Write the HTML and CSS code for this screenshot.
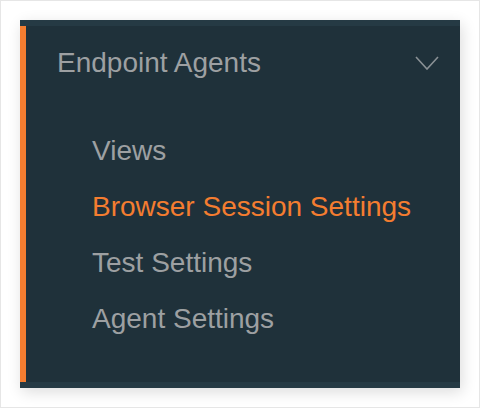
FILE: index.html
```html
<!DOCTYPE html>
<html>
<head>
<meta charset="utf-8">
<link rel="stylesheet" href="styles.css">
</head>
<body>
<div class="frame">
  <nav class="panel">
    <div class="inner">
      <div class="header">
        <span class="title">Endpoint Agents</span>
        <svg class="chev" width="24" height="14" viewBox="0 0 24 14"><path d="M1 1 L12 13 L23 1" fill="none" stroke="#8a9195" stroke-width="1.6"/></svg>
      </div>
      <ul class="items">
        <li class="item">Views</li>
        <li class="item active">Browser Session Settings</li>
        <li class="item">Test Settings</li>
        <li class="item">Agent Settings</li>
      </ul>
    </div>
  </nav>
</div>
</body>
</html>
```

FILE: styles.css
```css
html, body {
  margin: 0;
  padding: 0;
  background: #ffffff;
}
.frame {
  width: 480px;
  height: 408px;
  box-sizing: border-box;
  border: 1px solid #e6e6e6;
  padding: 19px;
}
.panel {
  width: 440px;
  height: 368px;
  box-sizing: border-box;
  background: #1f313a;
  border-top: 6px solid #253a44;
  border-bottom: 6px solid #253a44;
  box-shadow: 2px 4px 14px rgba(0, 0, 0, 0.14);
  font-family: "Liberation Sans", Arial, sans-serif;
  font-size: 28px;
}
.inner {
  height: 100%;
  box-sizing: border-box;
  border-left: 6px solid #f47d30;
  padding: 9px 21px 0 31px;
}
.header {
  display: flex;
  align-items: center;
  justify-content: space-between;
  height: 56px;
  line-height: 56px;
  color: #9da0a2;
}
.chev {
  display: block;
  margin-top: 0;
}
.items {
  list-style: none;
  margin: 32px 0 0 0;
  padding: 0 0 0 35px;
}
.item {
  line-height: 56px;
  color: #9da0a2;
}
.item.active {
  color: #f47d30;
}
```
